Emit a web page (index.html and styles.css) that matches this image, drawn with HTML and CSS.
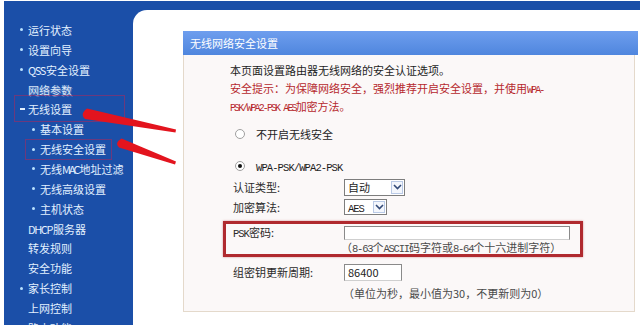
FILE: index.html
```html
<!DOCTYPE html>
<html lang="zh-CN">
<head>
<meta charset="utf-8">
<title>无线网络安全设置</title>
<link rel="stylesheet" href="styles.css">
</head>
<body>
<div class="frame">
  <nav class="sidebar">
    <ul class="menu">
      <li class="item b"><span class="dot"></span><span class="txt">运行状态</span></li>
      <li class="item b"><span class="dot"></span><span class="txt">设置向导</span></li>
      <li class="item b"><span class="dot"></span><span class="txt"><span class="slat">QSS</span>安全设置</span></li>
      <li class="item ghost"><span class="txt">网络参数</span></li>
      <li class="item b"><span class="dash"></span><span class="txt">无线设置</span></li>
      <li class="item sub"><span class="dot"></span><span class="txt">基本设置</span></li>
      <li class="item sub"><span class="dot"></span><span class="txt">无线安全设置</span></li>
      <li class="item sub"><span class="dot"></span><span class="txt">无线<span class="slat tight">MAC</span>地址过滤</span></li>
      <li class="item sub"><span class="dot"></span><span class="txt">无线高级设置</span></li>
      <li class="item sub"><span class="dot"></span><span class="txt">主机状态</span></li>
      <li class="item"><span class="txt"><span class="slat">DHCP</span>服务器</span></li>
      <li class="item"><span class="txt">转发规则</span></li>
      <li class="item"><span class="txt">安全功能</span></li>
      <li class="item b"><span class="dot"></span><span class="txt">家长控制</span></li>
      <li class="item"><span class="txt">上网控制</span></li>
      <li class="item"><span class="txt">路由功能</span></li>
    </ul>
    <div class="mark mark-a"></div>
    <div class="mark mark-b"></div>
  </nav>
  <main class="main">
    <section class="panel">
      <h1 class="panel-title">无线网络安全设置</h1>
      <div class="panel-body">
        <p class="desc">本页面设置路由器无线网络的安全认证选项。</p>
        <p class="warn">安全提示：为保障网络安全，强烈推荐开启安全设置，并使用<span class="lat">WPA-</span><br><span class="lat">PSK/WPA2-PSK AES</span>加密方法。</p>
        <div class="radio-row first"><span class="radio"></span><span class="txt">不开启无线安全</span></div>
        <div class="radio-row second"><span class="radio checked"></span><span class="txt"><span class="lat">WPA-PSK/WPA2-PSK</span></span></div>
        <div class="form-row row-auth">
          <span class="label">认证类型:</span>
          <div class="select sel-auto"><span class="sel-text">自动</span><span class="sel-btn"><svg viewBox="0 0 9 6" width="9" height="6"><path d="M1 1L4.5 4.5L8 1" stroke="#334a78" stroke-width="1.6" fill="none"/></svg></span></div>
        </div>
        <div class="form-row row-enc">
          <span class="label">加密算法:</span>
          <div class="select sel-aes"><span class="sel-text"><span class="lat">AES</span></span><span class="sel-btn"><svg viewBox="0 0 9 6" width="9" height="6"><path d="M1 1L4.5 4.5L8 1" stroke="#334a78" stroke-width="1.6" fill="none"/></svg></span></div>
        </div>
        <div class="highlight">
          <div class="form-row row-psk">
            <span class="label"><span class="lat">PSK</span>密码:</span>
            <span class="text-input psk-input"></span>
          </div>
          <div class="hint hint-psk">（<span class="lat">8-63</span>个<span class="lat">ASCII</span>码字符或<span class="lat">8-64</span>个十六进制字符）</div>
        </div>
        <div class="form-row row-group">
          <span class="label">组密钥更新周期:</span>
          <span class="text-input group-input">86400</span>
        </div>
        <div class="hint hint-group">（单位为秒，最小值为30，不更新则为0）</div>
      </div>
    </section>
  </main>
</div>
<svg class="arrows" width="200" height="200" viewBox="0 0 200 200">
  <path d="M87 108.5L176 129.5L175.5 132.5L85 119Q79.5 114 87 108.5Z" fill="#e3141e"/>
  <path d="M121.5 138.5L176 161.5L175 164.5L119 147.5Q114 143 121.5 138.5Z" fill="#e3141e"/>
</svg>
</body>
</html>
```
FILE: styles.css
```css
html, body {
  margin: 0;
  padding: 0;
}
body {
  width: 640px;
  height: 325px;
  overflow: hidden;
  position: relative;
  background: #ffffff;
  font-family: "Noto Sans CJK SC", "Noto Sans", sans-serif;
  font-size: 11px;
  color: #1d1d1d;
}
.frame {
  display: flex;
  margin: 1px 0 0 4px;
  height: 324px;
  background: #1b4fa8;
}
.sidebar {
  width: 129px;
  flex: none;
  position: relative;
  padding-top: 19px;
  box-sizing: border-box;
}
.menu {
  list-style: none;
  margin: 0;
  padding: 0;
}
.item {
  display: flex;
  align-items: center;
  height: 19.86px;
  padding-left: 24px;
  color: #e3f1ff;
  white-space: nowrap;
}
.txt {
  line-height: 16px;
}
.item.b { padding-left: 16px; }
.item.sub { padding-left: 28px; }
.item.ghost {
  color: #d8e6f6;
  text-shadow: 1px 1px 0 rgba(200, 210, 240, 0.35);
}
.dot {
  width: 3px;
  height: 3px;
  border-radius: 50%;
  background: #b9e2ff;
  margin-right: 5px;
  flex: none;
}
.dash {
  width: 5px;
  height: 2px;
  background: #e3f1ff;
  margin-right: 3px;
  flex: none;
}
.slat {
  letter-spacing: -1.4px;
  margin-right: 1px;
}
.slat.tight {
  letter-spacing: -2px;
}
.lat {
  font-family: "Liberation Mono", monospace;
  font-size: 10.5px;
  line-height: 1;
  letter-spacing: -1px;
}
.mark {
  position: absolute;
  border: 1px solid rgba(175, 40, 90, 0.55);
}
.mark-a {
  left: 10px;
  top: 94px;
  width: 109px;
  height: 25px;
}
.mark-b {
  left: 21px;
  top: 138px;
  width: 85px;
  height: 19px;
}
.main {
  flex: 1;
  margin-top: 9px;
  background: #ffffff;
  border-top-left-radius: 14px;
  padding: 21px 2px 0 50px;
}
.panel {
  height: 281px;
  display: flex;
  flex-direction: column;
}
.panel-title {
  margin: 0;
  height: 24px;
  line-height: 24px;
  padding-left: 7px;
  font-size: 11px;
  font-weight: normal;
  color: #ffffff;
  background: linear-gradient(#6e9eee, #4f86de);
}
.panel-body {
  flex: 1;
  margin-right: 3px;
  padding: 6px 0 0 46px;
  background: #fbf8f8;
  border: 1px solid #e4d9cb;
  border-top: none;
}
.desc, .warn {
  margin: 0;
  line-height: 18px;
}
.warn {
  color: #b6282d;
}
.warn .lat {
  font-size: 10px;
  letter-spacing: -1.9px;
}
.radio-row {
  display: flex;
  align-items: center;
  height: 18px;
  margin-left: 5px;
}
.radio-row.first { margin-top: 10px; }
.radio-row.second { margin-top: 14px; }
.radio-row .lat { letter-spacing: -0.9px; }
.radio {
  width: 10px;
  height: 10px;
  box-sizing: border-box;
  border: 1px solid #a0a0a0;
  border-radius: 50%;
  background: #ffffff;
  margin-right: 11px;
  display: flex;
  align-items: center;
  justify-content: center;
}
.radio.checked::after {
  content: "";
  width: 4px;
  height: 4px;
  border-radius: 50%;
  background: #111111;
}
.form-row {
  display: flex;
  align-items: center;
  margin-left: 3px;
}
.label {
  width: 111px;
  flex: none;
  color: #2a2a2a;
}
.row-auth { height: 20px; margin-top: 2px; }
.row-enc { height: 18px; margin-top: 1px; }
.select {
  display: flex;
  box-sizing: border-box;
  border: 1px solid #7d7d7d;
  background: #ffffff;
}
.sel-auto { width: 61px; height: 17px; }
.sel-aes { width: 43px; height: 16px; }
.sel-text {
  flex: 1;
  padding-left: 3px;
  line-height: 14px;
}
.sel-text .lat { letter-spacing: -1px; }
.sel-btn {
  width: 12px;
  margin: 1px;
  box-sizing: border-box;
  border: 1px solid #b9c9e6;
  background: #f3f6fc;
  display: flex;
  align-items: center;
  justify-content: center;
}
.highlight {
  margin: 5px 0 0 -7px;
  width: 360px;
  box-sizing: border-box;
  border: 3px solid #b02a2f;
  box-shadow: 0 0 2px rgba(176, 42, 47, 0.5);
}
.highlight .form-row { margin-left: 7px; }
.row-psk { height: 16px; }
.text-input {
  box-sizing: border-box;
  border: 1px solid #8a8a8a;
  border-bottom-color: #cfcfcf;
  background: #ffffff;
  display: block;
}
.psk-input { width: 226px; height: 14px; margin-top: 1px; }
.hint {
  color: #4a4a4a;
  white-space: nowrap;
}
.hint .lat { letter-spacing: -1.2px; }
.hint-psk {
  height: 14px;
  line-height: 14px;
  margin-left: 115px;
}
.row-group { height: 18px; margin-top: 6px; }
.group-input {
  width: 58px;
  height: 17px;
  padding-left: 3px;
  line-height: 15px;
  color: #222222;
}
.hint-group {
  margin: 3px 0 0 113px;
  line-height: 18px;
}
.arrows {
  position: absolute;
  left: 0;
  top: 0;
  pointer-events: none;
  filter: blur(0.5px);
}
```
